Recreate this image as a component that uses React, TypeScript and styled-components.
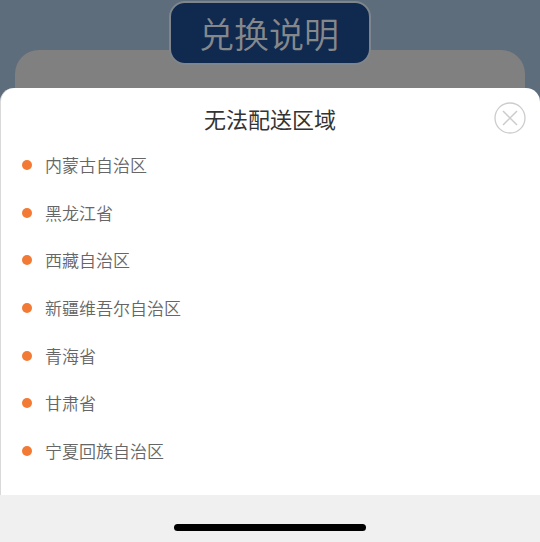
import React from "react";
import styled, { createGlobalStyle } from "styled-components";

const GlobalStyle = createGlobalStyle`
  *, *::before, *::after { box-sizing: border-box; }
  body {
    margin: 0;
    font-family: "Noto Sans CJK SC", sans-serif;
    background: #f0f0f0;
  }
`;

const Screen = styled.div`
  display: flex;
  flex-direction: column;
  min-height: 100vh;
`;

const Backdrop = styled.header`
  display: flex;
  flex-direction: column;
  align-items: center;
  height: 104px;
  padding: 1px 15px 0;
  background: #5d6d7c;
`;

const Banner = styled.h1`
  z-index: 1;
  margin: 0;
  padding: 0 30px 1px 28px;
  border: 2px solid #7f868b;
  border-radius: 16px;
  background: #10294f;
  color: #85888b;
  font-size: 35px;
  font-weight: 350;
  line-height: 59px;
`;

const BackdropCard = styled.div`
  flex: 1;
  align-self: stretch;
  margin-top: -15px;
  border-radius: 24px 24px 0 0;
  background: #808080;
`;

const Sheet = styled.section`
  z-index: 1;
  display: flex;
  flex: 1;
  flex-direction: column;
  margin-top: -16px;
  border-left: 1px solid #d9d9d9;
  border-radius: 14px 14px 0 0;
  background: #fff;
`;

const SheetHeader = styled.div`
  display: grid;
  grid-template-columns: 32px 1fr 32px;
  align-items: center;
  padding: 14px 14px 7px 13px;
`;

const SheetTitle = styled.h2`
  grid-column: 2;
  margin: 0;
  color: #333;
  font-size: 22px;
  font-weight: 400;
  line-height: 32px;
  text-align: center;
`;

const CloseButton = styled.button`
  width: 32px;
  height: 32px;
  padding: 0;
  border: 0;
  background: none;
  cursor: pointer;

  svg { display: block; }
`;

const RegionList = styled.ul`
  display: grid;
  flex: 1;
  grid-auto-rows: 1fr;
  margin: 0;
  padding: 0 21px 20px;
  list-style: none;
`;

const Region = styled.li`
  display: flex;
  align-items: center;
  gap: 13px;
  color: #666;
  font-size: 17px;
  font-weight: 350;
  line-height: 24px;

  &::before {
    content: "";
    width: 10px;
    height: 10px;
    border-radius: 50%;
    background: #f27a35;
  }
`;

const HomeArea = styled.footer`
  display: flex;
  justify-content: center;
  padding: 29px 0 11px;
  background: #f0f0f0;
`;

const HomeIndicator = styled.div`
  width: 192px;
  height: 7px;
  border-radius: 4px;
  background: #000;
`;

const regions = [
  "内蒙古自治区",
  "黑龙江省",
  "西藏自治区",
  "新疆维吾尔自治区",
  "青海省",
  "甘肃省",
  "宁夏回族自治区",
];

export default function App() {
  return (
    <Screen lang="zh-CN">
      <GlobalStyle />
      <Backdrop>
        <Banner>兑换说明</Banner>
        <BackdropCard />
      </Backdrop>
      <Sheet role="dialog" aria-labelledby="sheet-title">
        <SheetHeader>
          <SheetTitle id="sheet-title">无法配送区域</SheetTitle>
          <CloseButton type="button" aria-label="关闭">
            <svg width="32" height="32" viewBox="0 0 32 32" fill="none" stroke="#ccc">
              <circle cx="16" cy="16" r="15" strokeWidth="1.3" />
              <path d="M9 9l14 14M23 9L9 23" strokeWidth="1.5" />
            </svg>
          </CloseButton>
        </SheetHeader>
        <RegionList>
          {regions.map((name) => (
            <Region key={name}>{name}</Region>
          ))}
        </RegionList>
      </Sheet>
      <HomeArea>
        <HomeIndicator />
      </HomeArea>
    </Screen>
  );
}
